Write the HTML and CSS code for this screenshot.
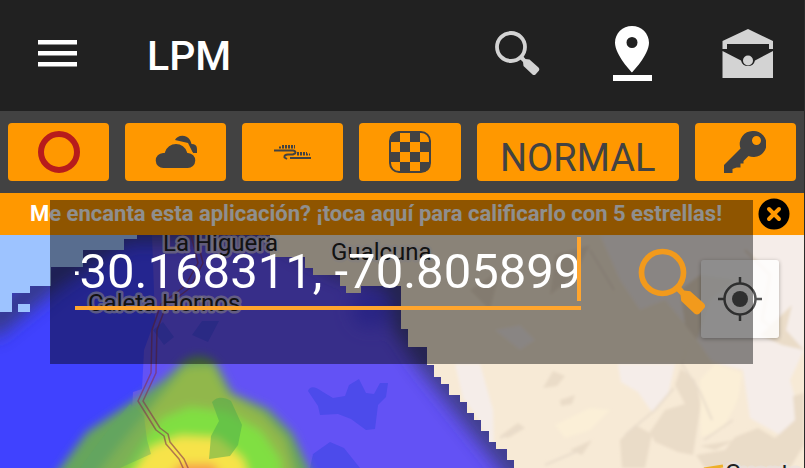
FILE: index.html
```html
<!DOCTYPE html>
<html lang="es">
<head>
<meta charset="utf-8">
<meta name="viewport" content="width=device-width, initial-scale=1">
<title>LPM</title>
<link rel="stylesheet" href="styles.css">
</head>
<body>
<svg class="defs" aria-hidden="true">
  <symbol id="search" viewBox="0 0 48 48">
    <circle cx="17" cy="17" r="14" fill="none" stroke="currentColor" stroke-width="3.8"/>
    <path fill="currentColor" d="M25.500 28.500 L28.500 25.500 L31.500 29 L35.500 29.500 L44.500 37.500 Q46 39 45 40.500 L41.500 44.500 Q40 45.500 38.500 44.500 L29.500 36 L29 32Z"/>
  </symbol>
</svg>
<div class="app">
  <header class="header">
    <button class="icon-button" type="button" aria-label="Menú">
      <svg width="39" height="27" viewBox="0 0 39 27"><path fill="#fff" d="M0 0h39v4.500H0zM0 11h39v4.500H0zM0 22h39v4.500H0z"/></svg>
    </button>
    <h1 class="title">LPM</h1>
    <div class="actions">
      <button class="icon-button search-action" type="button" aria-label="Buscar"><svg width="48" height="48"><use href="#search"/></svg></button>
      <button class="icon-button" type="button" aria-label="Ubicación">
        <svg width="40" height="56" viewBox="0 0 40 56"><path fill="#fff" fill-rule="evenodd" d="M20 0C10.600 0 3 7.400 3 16.700C3 29 20 46.500 20 46.500S37 29 37 16.700C37 7.400 29.400 0 20 0Zm0 11a5.500 5.500 0 1 1 0 11a5.500 5.500 0 1 1 0-11ZM1 49h39v6H1Z"/></svg>
      </button>
      <button class="icon-button" type="button" aria-label="Mensajes">
        <svg width="52" height="50" viewBox="0 0 52 50"><path fill="#d3d3d3" d="M26 0L51 12V20H47V15H5V20H0.500V12ZM0.500 22L19 31.500A7.200 7.200 0 0 0 33 31.500L51 22V49H0.500Z"/><circle cx="26" cy="31.500" r="5" fill="#d3d3d3"/></svg>
      </button>
    </div>
  </header>
  <nav class="toolbar" aria-label="Capas">
    <button type="button" aria-label="Círculo"><svg width="42" height="42" viewBox="0 0 42 42"><circle cx="21" cy="21" r="18" fill="none" stroke="#b71c1c" stroke-width="6"/></svg></button>
    <button type="button" aria-label="Nubes"><svg width="42" height="42" viewBox="0 0 42 42"><path fill="#424242" d="M20 9C22 4 31 2.500 35 9Q36 11 36.500 13Q42 13 42 18V22H38L33 12Z"/><path fill="#424242" stroke="#ff9800" stroke-width="2" d="M8.500 38A8.500 8.500 0 0 1 8 21H9A12.500 12.500 0 0 1 33 21A8.500 8.500 0 0 1 32.500 38Z"/></svg></button>
    <button type="button" aria-label="Corriente en chorro"><svg width="40" height="42" viewBox="0 0 40 42" fill="none" stroke="#424242"><path stroke-width="2" d="M1 19.500H20Q23.500 20 22 22.500L20 23.500H15Q11 23.500 11.500 26.500L14 28M17 27H38"/><path stroke-width="2" stroke-dasharray="2 1" d="M6 16.500H22M24 23.500H37"/><path stroke-width="2" stroke-dasharray="2 1" d="M9 15H22M24 22H34"/></svg></button>
    <button type="button" aria-label="Cuadrícula"><svg width="42" height="42" viewBox="0 0 42 42"><rect x="1" y="1" width="40" height="40" rx="9" fill="none" stroke="#424242" stroke-width="2"/><path fill="#424242" d="M9 1H11V11H1V9Q1 1 9 1ZM21 2h10v9H21ZM11 11h10v10H11ZM31 11h10v10H31ZM2 21h9v10H2ZM21 21h10v10H21ZM11 31h10v10H11ZM31 31H41V33Q41 41 33 41H31Z"/></svg></button>
    <button class="mode" type="button">NORMAL</button>
    <button type="button" aria-label="Clave"><svg width="42" height="42" viewBox="0 0 42 42"><path fill="#424242" fill-rule="evenodd" d="M29 0A13 13 0 1 1 24.500 25L19.500 30V32.500H16.500V36.500H12.500L8.500 38V42H0V34L16.500 17.500A13 13 0 0 1 29 0ZM32.500 5A4.500 4.500 0 1 0 32.500 14A4.500 4.500 0 1 0 32.500 5Z"/></svg></button>
  </nav>
  <div class="banner">
    <a class="rate" href="#">Me encanta esta aplicación? ¡toca aquí para calificarlo con 5 estrellas!</a>
    <button class="icon-button" type="button" aria-label="Cerrar"><svg width="32" height="32" viewBox="0 0 32 32"><circle cx="16" cy="16" r="15.500"/><path d="M11 11L21 21M21 11L11 21" stroke="#ff9800" stroke-width="4" stroke-linecap="round"/></svg></button>
  </div>
  <main class="map">
    <svg class="map-canvas" viewBox="0 235 804 233" preserveAspectRatio="xMinYMin slice" role="img" aria-label="Mapa">
      <defs>
        <clipPath id="coverage"><path d="M137 230V239H124V250H83V267H51V286H30V293H12V312H0V468H514V460H507V449H496V442H489V431H481V420H474V413H467V402H460V395H449V384H441V377H434V365H427V347H408V329H401V286H361V293H346V286H340V275H313V268H305V257H270V230ZM18 304H30V312H18Z" clip-rule="evenodd"/></clipPath>
        <filter id="relief"><feGaussianBlur stdDeviation="1.500"/></filter>
        <filter id="soft" x="-30%" y="-30%" width="160%" height="160%"><feGaussianBlur stdDeviation="5"/></filter>
        <filter id="wide" x="-30%" y="-30%" width="160%" height="160%"><feGaussianBlur stdDeviation="9"/></filter>
      </defs>
      <rect y="235" width="804" height="233" fill="#f7ead6"/>
      <path fill="#9dc3ff" d="M0 235H150V468H0Z"/>
      <g filter="url(#relief)">
        <g fill="#f5ede9">
          <path d="M455 364L480 364L493 410L494 446L487 440L478 418L463 398Z"/>
          <path d="M600 235L804 235V350L790 380L804 430L780 435L750 418L743 370L712 362L690 330L665 300L640 310L620 280Z"/>
          <path d="M618 364L675 364L668 395L652 412L638 392L621 382ZM495 330L520 325L535 340L520 350Z"/>
        </g>
        <g fill="#eadcc8">
          <path d="M543 388L553 371L565 376L557 386ZM560 400L575 395L572 404L561 406ZM690 340L680 368L695 380L701 404L693 455L678 452L655 442L650 432L665 410L685 404L675 385ZM804 393L793 396L795 420L775 438L758 428L735 437L725 450L696 455L705 468H790L804 445Z"/>
          <path d="M620 440L635 425L652 434L645 468H622ZM708 410L739 399L732 409L712 414ZM705 394L731 382L720 396ZM700 446L735 440L715 450ZM570 450L592 440L582 455ZM500 436L518 423L525 428L508 438Z"/>
          <path d="M680 290L700 275L735 280L710 300L697 340L685 325ZM760 335L792 305L786 330L804 350L782 345ZM555 255L590 245L575 275L550 295ZM470 290L500 270L490 310Z"/>
        </g>
        <path fill="#fbefd7" d="M700 380L715 364L742 373L738 400L722 430L701 437ZM555 425L590 408L610 410L590 430L565 438Z"/>
        <path fill="none" stroke="#e9dccb" stroke-width="2" d="M682 364L700 392L712 420M674 388L655 410L625 435M733 420L704 440M545 465L580 450M745 250L770 275L762 320L785 338M500 438L522 427M590 250L614 290"/>
      </g>
      <g clip-path="url(#coverage)">
        <rect y="235" width="530" height="233" fill="#4042ff"/>
        <path fill="#6352f5" d="M152 235H530V468H160L146 415L132 412L133 392L142 389L144 350L155 320Z"/>
        <g filter="url(#wide)"><path fill="none" stroke="#35385f" stroke-width="28" d="M-14 328L52 275L125 228H280L340 262L398 280L404 320L429 358L527 480" opacity=".72"/><ellipse cx="370" cy="310" rx="18" ry="18" fill="#4940ed"/></g>
        <g fill="#4c4beb"><path d="M308 391Q311 383 323 392L333 398L345 396L349 385L359 379L366 393L374 394L380 383L388 383L386 397L378 405L375 429L366 430L351 419L338 414L320 415L318 406Z"/><path d="M313 454L330 442L344 448L360 468H310ZM192 335L202 321H219L208 342ZM153 330L163 322L174 337L164 345Z"/></g>
        <g filter="url(#soft)">
          <path fill="#66a55b" d="M48 485L87 432L132 402L165 379L185 360Q202 350 216 363L232 393L268 409L292 433L314 480Z"/>
          <path fill="#91b74c" d="M85 490L120 445L157 400L185 367L213 365L227 393L263 413L286 439L300 490Z"/>
          <path fill="#80df43" d="M115 485L143 441L162 418L190 407L227 412L261 431L281 460V490Z"/>
          <path fill="#f7e349" d="M125 485L150 448L180 436L217 438L243 459L253 490Z"/>
          <path fill="#f69b48" d="M155 495L180 464H213L235 495Z"/>
        </g>
        <path fill="#4ca94c" opacity=".5" d="M212 402Q219 394 231 401L242 425L238 445L230 456L209 459L211 436L219 421Z"/>
        <path fill="#60a563" opacity=".4" d="M130 404L144 416L147 440L151 454L120 468H80L105 434Z"/>
      </g>
      <g fill="none" stroke-linejoin="round" stroke-width="1.500" opacity=".6">
        <path stroke="#84304f" d="M191 235L198 263L185 286L161 304L152 330L151 373L138 401L156 430L164 436L166 444L179 459L184 470M196 235L203 263L190 288L166 306L157 330L156 373L143 401L160 428L168 434L170 442L184 459L189 470"/>
      </g>
      <path fill="none" stroke="#edaf29" stroke-width="3" d="M704 469L723 466"/>
      <g class="place-names"><text x="163" y="251">La Higuera</text><text x="331" y="260">Gualcuna</text><text x="88" y="311">Caleta Hornos</text><text x="725" y="481">Guanta</text></g>
    </svg>
    <button class="locate" type="button" aria-label="Mi ubicación"><svg width="44" height="44" viewBox="0 0 44 44" fill="none" stroke="#555" stroke-width="2.500"><circle cx="22" cy="22" r="15.500"/><path d="M22 0V7M22 37V44M0 22H7M37 22H44"/><circle cx="22" cy="22" r="8" fill="#555" stroke="none"/></svg></button>
  </main>
  <form class="search-panel">
    <div class="field">
      <input type="text" aria-label="Coordenadas" value="-30.168311, -70.805899">
      <span class="caret"></span>
    </div>
    <button class="icon-button submit" type="button" aria-label="Buscar coordenadas"><svg width="72" height="72"><use href="#search"/></svg></button>
  </form>
</div>
</body>
</html>
```
FILE: styles.css
```css
* {
  box-sizing: border-box;
}

body {
  margin: 0;
  background: #212121;
  font-family: Roboto, "Liberation Sans", sans-serif;
}

button {
  margin: 0;
  padding: 0;
  border: 0;
  font: inherit;
  cursor: pointer;
}

button svg {
  display: block;
}

.defs {
  display: none;
}

.app {
  position: relative;
  display: flex;
  flex-direction: column;
  height: 100vh;
  overflow: hidden;
  border-right: 1px solid #2b2b2b;
}

.header {
  display: flex;
  align-items: center;
  min-height: 111px;
  padding: 0 30px 4px 38px;
  background: #212121;
}

.icon-button {
  background: none;
}

.title {
  margin: 4px 0 0 70px;
  color: #fff;
  font-size: 41px;
  font-weight: 500;
  line-height: 48px;
}

.actions {
  display: flex;
  align-items: center;
  gap: 70px;
  margin-left: auto;
}

.search-action {
  color: #d3d3d3;
}

.toolbar {
  display: grid;
  grid-template-columns: repeat(4, 1fr) 2fr 1fr;
  gap: 16px;
  padding: 12px 8px;
  background: #424242;
}

.toolbar button {
  display: flex;
  align-items: center;
  justify-content: center;
  min-width: 0;
  height: 58px;
  border-radius: 4px;
  background: #ff9800;
  color: #424242;
}

.toolbar .mode {
  padding-top: 12px;
  font-size: 38px;
  line-height: 46px;
}

.banner {
  display: flex;
  align-items: center;
  justify-content: space-between;
  min-height: 42px;
  padding: 0 14px 0 30px;
  background: #ff9800;
}

.rate {
  color: #fff;
  font-size: 22px;
  font-weight: 700;
  line-height: 26px;
  text-decoration: none;
  white-space: nowrap;
}

.map {
  position: relative;
  flex: 1;
  min-height: 0;
  overflow: hidden;
}

.map-canvas {
  display: block;
  width: 100%;
  height: 100%;
}

.place-names {
  fill: #202020;
  stroke: #e8e2e2;
  stroke-opacity: 0.6;
  stroke-width: 5px;
  stroke-linejoin: round;
  paint-order: stroke;
  font-size: 24px;
}

.locate {
  position: absolute;
  top: 25px;
  right: 25px;
  display: grid;
  place-items: center;
  width: 78px;
  height: 78px;
  border-radius: 3px;
  background: rgba(255, 255, 255, 0.8);
  box-shadow: 0 1px 4px rgba(0, 0, 0, 0.3);
}

.search-panel {
  position: absolute;
  top: 200px;
  left: 50px;
  right: 51px;
  display: flex;
  align-items: flex-start;
  justify-content: space-between;
  height: 164px;
  padding: 37px 44px 0 25px;
  background: rgba(0, 0, 0, 0.44);
}

.field {
  position: relative;
  display: flex;
  justify-content: flex-end;
  width: 506px;
  height: 73px;
  overflow: hidden;
  border-bottom: 4px solid #ffa52e;
}

.field input {
  flex: none;
  width: 515px;
  height: 69px;
  padding: 0;
  border: 0;
  outline: 0;
  background: none;
  color: #fff;
  font: 49px/69px Roboto, "Liberation Sans", sans-serif;
}

.caret {
  position: absolute;
  top: 0;
  right: 0;
  width: 4px;
  height: 64px;
  background: #ffa52e;
}

.submit {
  margin-top: 10px;
  color: #f29a1c;
}
```
